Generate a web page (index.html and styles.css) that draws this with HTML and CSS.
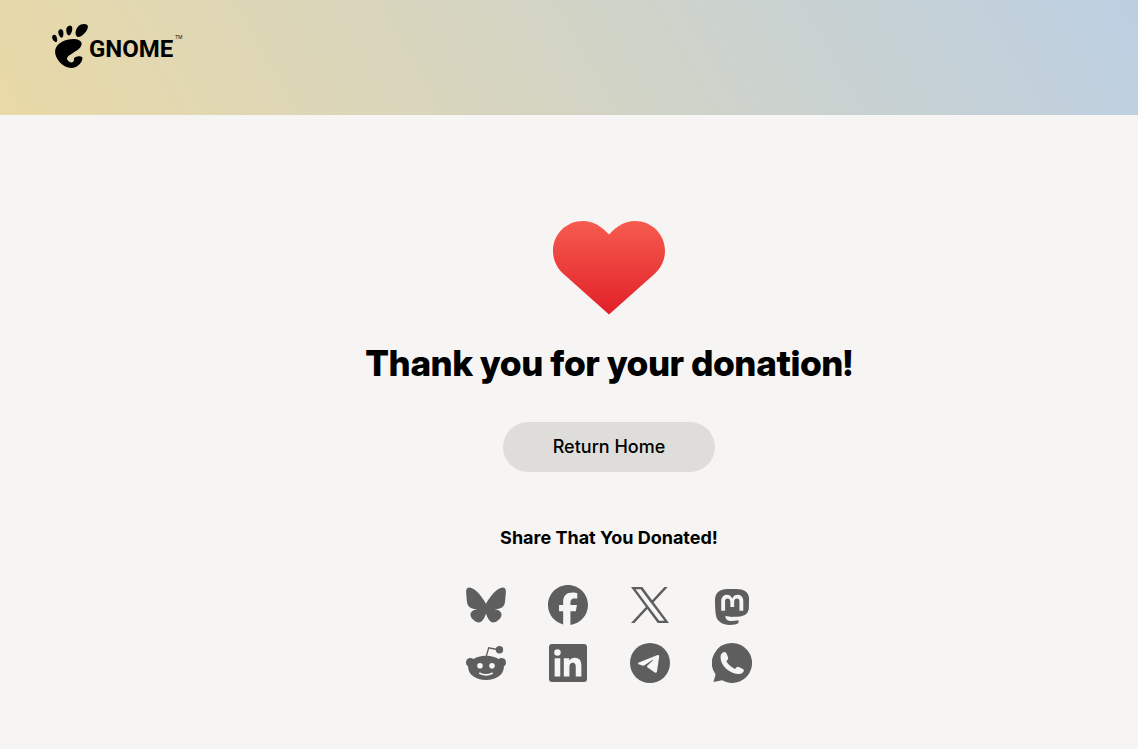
FILE: index.html
```html
<!DOCTYPE html>
<html lang="en">
<head>
    <meta charset="UTF-8">
    <meta name="viewport" content="width=device-width, initial-scale=1.0">
    <title>Thank you for your donation!</title>
    <link rel="stylesheet" href="styles.css">
</head>
<body>
    <header class="header">
        <a class="logo" href="#" aria-label="GNOME">
            <svg class="foot" viewBox="0 0 96.2 118.3" aria-hidden="true">
                <path d="M86.068 0C61.466 0 56.851 35.041 70.691 35.041C84.529 35.041 110.671 0 86.068 0z"/>
                <path d="M45.217 30.699C52.586 31.149 60.671 2.577 46.821 4.374C32.976 6.171 37.845 30.249 45.217 30.699z"/>
                <path d="M11.445 48.453C16.686 46.146 12.12 23.581 3.208 29.735C-5.7 35.89 6.204 50.759 11.445 48.453z"/>
                <path d="M26.212 36.642C32.451 35.37 32.793 9.778 21.667 14.369C10.539 18.961 19.978 37.916 26.212 36.642z"/>
                <path d="M58.791 93.913C59.898 102.367 52.589 106.542 45.431 101.092C22.644 83.743 83.16 75.088 79.171 51.386C75.86 31.712 15.495 37.769 8.621 68.553C3.968 89.374 27.774 118.26 52.614 118.26C64.834 118.26 78.929 107.226 81.566 93.248C83.58 82.589 57.867 86.86 58.791 93.913z"/>
            </svg>
            <span class="logo-name">GNOME</span>
            <span class="logo-tm">TM</span>
        </a>
    </header>

    <main class="content">
        <svg class="heart" viewBox="0 0 112 94" aria-hidden="true">
            <defs>
                <linearGradient id="heartFill" x1="0" y1="0" x2="0" y2="1">
                    <stop offset="0" stop-color="#f65b4f"/>
                    <stop offset="1" stop-color="#e22028"/>
                </linearGradient>
            </defs>
            <path fill="url(#heartFill)" d="M56 13.500C48 5 40 0 30 0C13 0 0 13.500 0 30C0 39 4 47 10 52.500L56 93.500L102 52.500C108 47 112 39 112 30C112 13.500 99 0 82 0C72 0 64 5 56 13.500z"/>
        </svg>

        <h1>Thank you for your donation!</h1>
        <a class="home-btn" href="#">Return Home</a>

        <h2>Share That You Donated!</h2>
        <div class="share">
            <a href="#" aria-label="Bluesky">
                <svg width="40" height="40" viewBox="0 0 512 512"><path d="M111.8 62.2C170.2 105.9 233 194.7 256 242.4c23-47.6 85.8-136.4 144.2-180.2c42.1-31.6 110.3-56 110.3 21.8c0 15.5-8.9 130.5-14.1 149.2C478.2 298 412 314.6 353.1 304.5c102.9 17.5 129.1 75.5 72.5 133.5c-107.4 110.2-154.3-27.6-166.3-62.9c-1.7-4.9-2.6-7.8-3.3-7.8s-1.6 3-3.3 7.8c-12 35.3-59 173.1-166.3 62.9c-56.5-58-30.4-116 72.5-133.5C100 314.6 33.8 298 15.7 233.1C10.4 214.4 1.5 99.4 1.5 83.9c0-77.8 68.2-53.4 110.3-21.8z"/></svg>
            </a>
            <a href="#" aria-label="Facebook">
                <svg width="40" height="40" viewBox="0 0 24 24"><path d="M9.101 23.691v-7.98H6.627v-3.667h2.474v-1.58c0-4.085 1.848-5.978 5.858-5.978.401 0 .955.042 1.468.103a8.68 8.68 0 0 1 1.141.195v3.325a8.623 8.623 0 0 0-.653-.036 26.805 26.805 0 0 0-.733-.009c-.707 0-1.259.096-1.675.309a1.686 1.686 0 0 0-.679.622c-.258.42-.374.995-.374 1.752v1.297h3.919l-.386 2.103-.287 1.564h-3.246v8.245C19.396 23.238 24 18.179 24 12.044c0-6.627-5.373-12-12-12s-12 5.373-12 12c0 5.628 3.874 10.35 9.101 11.647Z"/></svg>
            </a>
            <a href="#" aria-label="X">
                <svg width="38" height="36" viewBox="0 0 1200 1227" preserveAspectRatio="none"><path d="M714.163 519.284L1160.89 0H1055.03L667.137 450.887L357.328 0H0L468.492 681.821L0 1226.37H105.866L515.491 750.218L842.672 1226.37H1200L714.137 519.284H714.163ZM569.165 687.828L521.697 619.934L144.011 79.6944H306.615L611.412 515.685L658.88 583.579L1055.08 1150.3H892.476L569.165 687.854V687.828Z"/></svg>
            </a>
            <a class="mastodon" href="#" aria-label="Mastodon">
                <svg width="36" height="36" viewBox="0 0 24 24"><path d="M23.268 5.313c-.35-2.578-2.617-4.61-5.304-5.004C17.51.242 15.792 0 11.813 0h-.03c-3.98 0-4.835.242-5.288.309C3.882.692 1.496 2.518.917 5.127.64 6.412.61 7.837.661 9.143c.074 1.874.088 3.745.26 5.611.118 1.24.325 2.47.62 3.68.55 2.237 2.777 4.098 4.96 4.857 2.336.792 4.849.923 7.256.38.265-.061.527-.132.786-.213.585-.184 1.27-.39 1.774-.753a.057.057 0 0 0 .023-.043v-1.809a.052.052 0 0 0-.02-.041.053.053 0 0 0-.046-.01 20.282 20.282 0 0 1-4.709.545c-2.73 0-3.463-1.284-3.674-1.818a5.593 5.593 0 0 1-.319-1.433.053.053 0 0 1 .066-.054c1.517.363 3.072.546 4.632.546.376 0 .75 0 1.125-.01 1.57-.044 3.224-.124 4.768-.422.038-.008.077-.015.11-.024 2.435-.464 4.753-1.92 4.989-5.604.008-.145.03-1.52.03-1.67.002-.512.167-3.63-.024-5.545zm-3.748 9.195h-2.561V8.29c0-1.309-.55-1.976-1.67-1.976-1.23 0-1.846.79-1.846 2.35v3.403h-2.546V8.663c0-1.56-.617-2.35-1.848-2.35-1.112 0-1.668.668-1.67 1.977v6.218H4.822V8.102c0-1.31.337-2.35 1.011-3.12.696-.77 1.608-1.164 2.74-1.164 1.311 0 2.302.5 2.962 1.498l.638 1.06.638-1.06c.66-.999 1.65-1.498 2.96-1.498 1.13 0 2.043.395 2.74 1.164.675.77 1.012 1.81 1.012 3.12z"/></svg>
            </a>
            <a href="#" aria-label="Reddit">
                <svg width="40" height="40" viewBox="0 0 40 40">
                    <circle cx="33.500" cy="6.700" r="3.700"/>
                    <circle cx="4.500" cy="19.500" r="4.500"/>
                    <circle cx="35.500" cy="19.500" r="4.500"/>
                    <path d="M20 12.800C30.500 12.800 37.800 18 37.800 24.300C37.800 31.500 30.500 37 20 37S2.200 31.500 2.200 24.300C2.200 18 9.500 12.800 20 12.800z"/>
                    <path class="line" d="M20.200 13.500L22.700 4.800L31 6.500"/>
                    <circle class="cut" cx="14" cy="22.700" r="2.800"/>
                    <circle class="cut" cx="26" cy="22.700" r="2.800"/>
                    <path class="cut-line" d="M13.800 30.300Q20 33.500 26.200 30.300"/>
                </svg>
            </a>
            <a href="#" aria-label="LinkedIn">
                <svg width="38" height="38" viewBox="0 0 24 24"><path d="M20.447 20.452h-3.554v-5.569c0-1.328-.027-3.037-1.852-3.037-1.853 0-2.136 1.445-2.136 2.939v5.667H9.351V9h3.414v1.561h.046c.477-.9 1.637-1.85 3.37-1.85 3.601 0 4.267 2.37 4.267 5.455v6.286zM5.337 7.433a2.062 2.062 0 0 1-2.063-2.065 2.064 2.064 0 1 1 2.063 2.065zm1.782 13.019H3.555V9h3.564v11.452zM22.225 0H1.771C.792 0 0 .774 0 1.729v20.542C0 23.227.792 24 1.771 24h20.451C23.2 24 24 23.227 24 22.271V1.729C24 .774 23.2 0 22.222 0h.003z"/></svg>
            </a>
            <a href="#" aria-label="Telegram">
                <svg width="40" height="40" viewBox="0 0 40 40">
                    <circle cx="20" cy="20" r="20"/>
                    <path class="cut" d="M8.300 19.800L27.500 12Q29.500 11.500 29.200 13.500L27 28.500Q26.500 30.500 24.800 29.500L17.300 24.200Q16.500 23.300 17.500 22.500L23 17.200Q23.300 16.500 22.300 17L14.500 22.300Q13.500 23 12.300 22.600L8.500 21.300Q7.200 20.500 8.300 19.800z"/>
                </svg>
            </a>
            <a href="#" aria-label="WhatsApp">
                <svg width="40" height="40" viewBox="0 0 40 40">
                    <path d="M20 0A20 20 0 1 1 10 37.300L1.500 39L3.600 31.500A20 20 0 0 1 20 0z"/>
                    <path class="cut" d="M10.500 9.700Q13.800 8 14.800 11L16.200 14.800Q16.500 16.500 14.300 18.300Q17.500 23.500 23 26Q25.200 23 26.800 23.900L31.300 26.200Q32.300 27 31.500 28.800Q30 31.300 26 31C17 30.500 8.500 22 8.500 14.500Q8.300 11 10.500 9.700z"/>
                </svg>
            </a>
        </div>
    </main>
</body>
</html>
```
FILE: styles.css
```css
body {
    margin: 0;
    font-family: Inter, "Liberation Sans", sans-serif;
    background: #f6f5f4;
    color: #000;
}

a {
    color: inherit;
    text-decoration: none;
}

.header {
    display: flex;
    align-items: flex-start;
    box-sizing: border-box;
    min-height: 115px;
    padding: 24px 52px;
    background: linear-gradient(60deg, #e9d9a7, #bccfe2);
}

.logo {
    display: flex;
    align-items: center;
}

.foot {
    width: 36px;
    height: 44px;
}

.logo-name {
    margin-left: 1px;
    padding-top: 6px;
    font: bold 24px/30px Roboto, "Open Sans", sans-serif;
}

.logo-tm {
    align-self: flex-start;
    margin: 9px 0 0 2px;
    font: 5px/8px "Open Sans", sans-serif;
}

.content {
    display: flex;
    flex-direction: column;
    align-items: center;
    padding: 106px 0 66px 80px;
}

.heart {
    width: 112px;
    height: 94px;
}

h1 {
    margin: 23px 0 34px;
    font-family: "Inter Display", Inter, sans-serif;
    font-size: 36px;
    line-height: 50px;
    font-weight: 800;
}

.home-btn {
    padding: 10px 50px;
    border-radius: 25px;
    background: #deddda;
    font-size: 18px;
    line-height: 30px;
    font-weight: 500;
}

h2 {
    margin: 51px 0 32px;
    font-size: 18px;
    line-height: 30px;
    font-weight: 700;
}

.share {
    display: grid;
    grid-template-columns: repeat(4, 40px);
    gap: 18px 42px;
}

.share a {
    display: flex;
    align-items: center;
    justify-content: center;
    height: 40px;
}

.share .mastodon {
    align-items: flex-end;
}

.share svg {
    display: block;
    fill: #5e5e5e;
}

.share .cut {
    fill: #f6f5f4;
}

.share .line,
.share .cut-line {
    fill: none;
    stroke: #5e5e5e;
    stroke-width: 1.300;
}

.share .cut-line {
    stroke: #f6f5f4;
    stroke-width: 1.700;
    stroke-linecap: round;
}
```
